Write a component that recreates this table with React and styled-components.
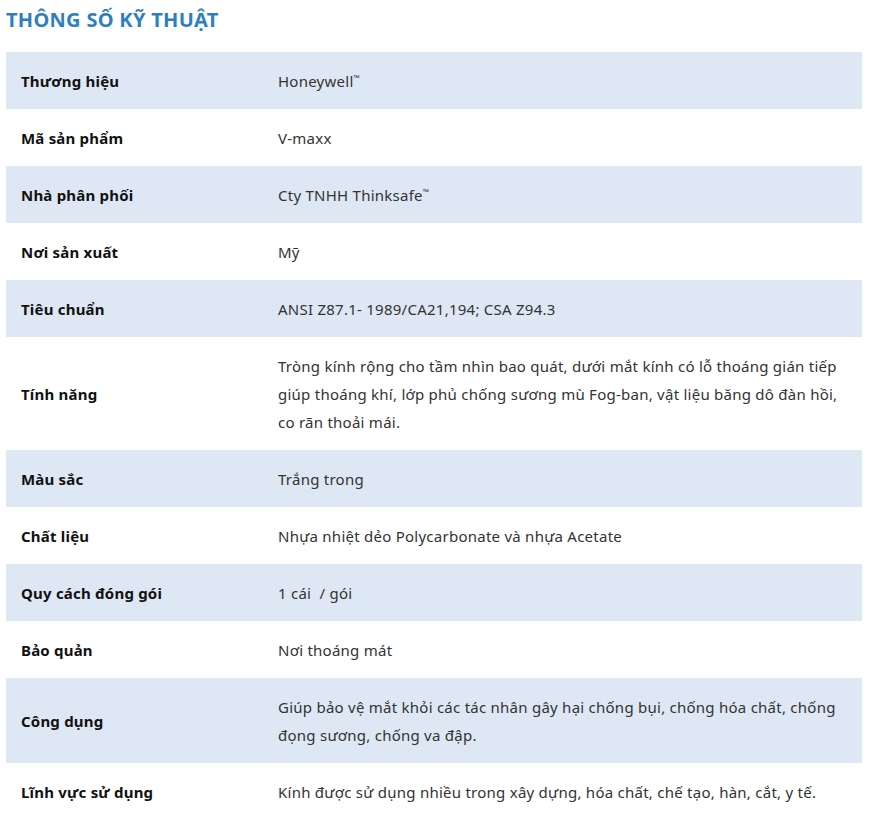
import React from "react";
import styled, { createGlobalStyle } from "styled-components";

const Tm = styled.sup`
  font-size: 8px;
  line-height: 0;
  vertical-align: 6px;
`;

const specs = [
  { label: "Thương hiệu", value: <>Honeywell<Tm>™</Tm></> },
  { label: "Mã sản phẩm", value: "V-maxx" },
  { label: "Nhà phân phối", value: <>Cty TNHH Thinksafe<Tm>™</Tm></> },
  { label: "Nơi sản xuất", value: "Mỹ" },
  { label: "Tiêu chuẩn", value: "ANSI Z87.1- 1989/CA21,194; CSA Z94.3" },
  {
    label: "Tính năng",
    value:
      "Tròng kính rộng cho tầm nhìn bao quát, dưới mắt kính có lỗ thoáng gián tiếp giúp thoáng khí, lớp phủ chống sương mù Fog-ban, vật liệu băng dô đàn hồi, co rãn thoải mái.",
  },
  { label: "Màu sắc", value: "Trắng trong" },
  { label: "Chất liệu", value: "Nhựa nhiệt dẻo Polycarbonate và nhựa Acetate" },
  { label: "Quy cách đóng gói", value: "1 cái  / gói" },
  { label: "Bảo quản", value: "Nơi thoáng mát" },
  {
    label: "Công dụng",
    value:
      "Giúp bảo vệ mắt khỏi các tác nhân gây hại chống bụi, chống hóa chất, chống đọng sương, chống va đập.",
  },
  {
    label: "Lĩnh vực sử dụng",
    value: "Kính được sử dụng nhiều trong xây dựng, hóa chất, chế tạo, hàn, cắt, y tế.",
  },
];

const GlobalStyle = createGlobalStyle`
  body {
    margin: 0;
    background: #fff;
    font-family: "Noto Sans", "Open Sans", sans-serif;
  }
`;

const Section = styled.section`
  padding: 6px 6px 0;
`;

const Title = styled.h2`
  margin: 0 0 18px;
  font-size: 20px;
  line-height: 28px;
  font-weight: 700;
  letter-spacing: 0.3px;
  color: #2f7fbf;
`;

const Table = styled.table`
  width: 856px;
  border-collapse: collapse;
  table-layout: fixed;
`;

const Row = styled.tr`
  background: ${(p) => (p.$shaded ? "#dee8f4" : "#fff")};
`;

const Cell = styled.td`
  padding: 15px 15px 14px;
  font-size: 15px;
  line-height: 28px;
  vertical-align: middle;
  color: ${(p) => (p.$label ? "#111" : "#333")};
  font-weight: ${(p) => (p.$label ? 700 : 400)};
  letter-spacing: ${(p) => (p.$label ? "0.2px" : "0.25px")};
  white-space: pre-wrap;
`;

const LabelCol = styled.col`
  width: 257px;
`;

export default function App() {
  return (
    <>
      <GlobalStyle />
      <Section>
        <Title>THÔNG SỐ KỸ THUẬT</Title>
        <Table>
          <colgroup>
            <LabelCol />
            <col />
          </colgroup>
          <tbody>
            {specs.map((s, i) => (
              <Row key={s.label} $shaded={i % 2 === 0}>
                <Cell $label>{s.label}</Cell>
                <Cell>{s.value}</Cell>
              </Row>
            ))}
          </tbody>
        </Table>
      </Section>
    </>
  );
}
